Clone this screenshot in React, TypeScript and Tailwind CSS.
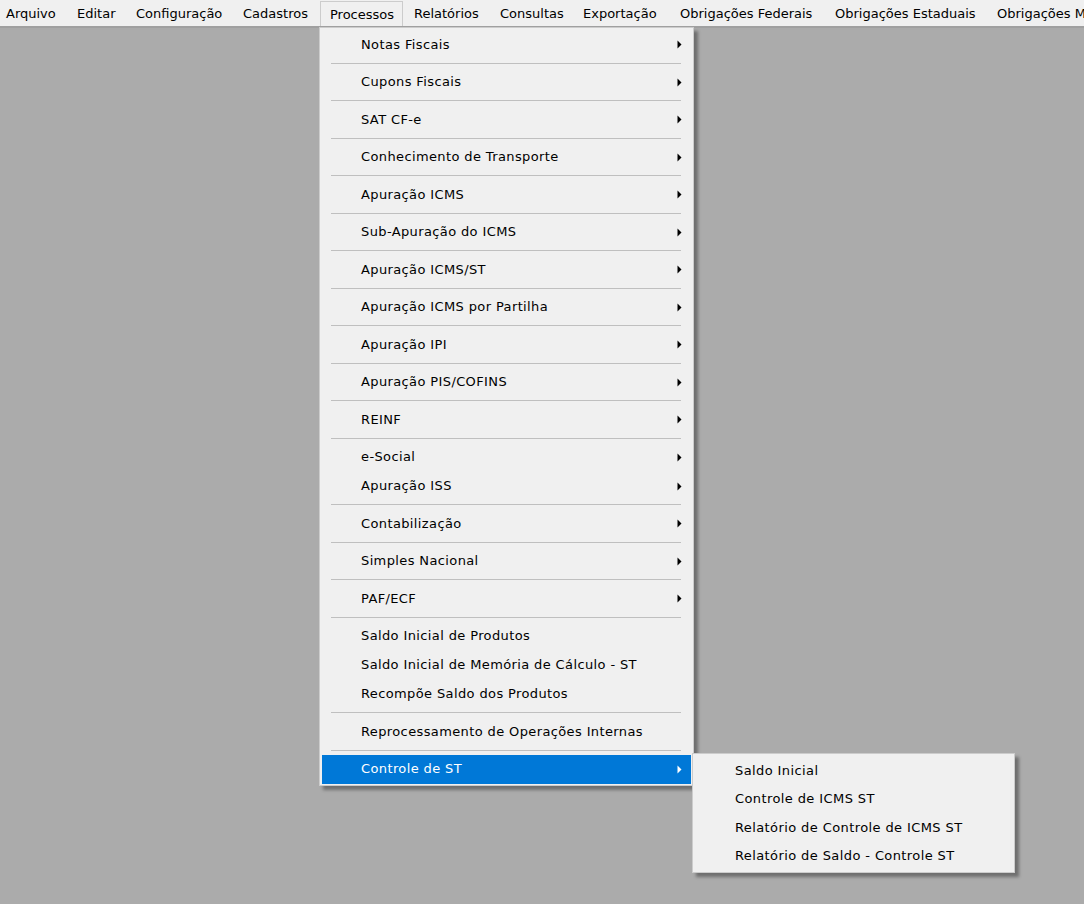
import React from "react";

type Entry = { label?: string; sub?: boolean; sep?: boolean; active?: boolean };

const top: { label: string; w: number }[] = [
  { label: "Arquivo", w: 68 },
  { label: "Editar", w: 59 },
  { label: "Configuração", w: 107 },
  { label: "Cadastros", w: 86 },
  { label: "Processos", w: 85 },
  { label: "Relatórios", w: 86 },
  { label: "Consultas", w: 83 },
  { label: "Exportação", w: 97 },
  { label: "Obrigações Federais", w: 155 },
  { label: "Obrigações Estaduais", w: 162 },
  { label: "Obrigações Municipais", w: 200 },
];

const items: Entry[] = [
  { label: "Notas Fiscais", sub: true },
  { sep: true },
  { label: "Cupons Fiscais", sub: true },
  { sep: true },
  { label: "SAT CF-e", sub: true },
  { sep: true },
  { label: "Conhecimento de Transporte", sub: true },
  { sep: true },
  { label: "Apuração ICMS", sub: true },
  { sep: true },
  { label: "Sub-Apuração do ICMS", sub: true },
  { sep: true },
  { label: "Apuração ICMS/ST", sub: true },
  { sep: true },
  { label: "Apuração ICMS por Partilha", sub: true },
  { sep: true },
  { label: "Apuração IPI", sub: true },
  { sep: true },
  { label: "Apuração PIS/COFINS", sub: true },
  { sep: true },
  { label: "REINF", sub: true },
  { sep: true },
  { label: "e-Social", sub: true },
  { label: "Apuração ISS", sub: true },
  { sep: true },
  { label: "Contabilização", sub: true },
  { sep: true },
  { label: "Simples Nacional", sub: true },
  { sep: true },
  { label: "PAF/ECF", sub: true },
  { sep: true },
  { label: "Saldo Inicial de Produtos" },
  { label: "Saldo Inicial de Memória de Cálculo - ST" },
  { label: "Recompõe Saldo dos Produtos" },
  { sep: true },
  { label: "Reprocessamento de Operações Internas" },
  { sep: true },
  { label: "Controle de ST", sub: true, active: true },
];

const subItems = [
  "Saldo Inicial",
  "Controle de ICMS ST",
  "Relatório de Controle de ICMS ST",
  "Relatório de Saldo - Controle ST",
];

function Arrow({ white }: { white?: boolean }) {
  return (
    <svg width="5" height="9" viewBox="0 0 5 9" className="block">
      <path d="M0.5 0.5 L4.5 4.5 L0.5 8.5 Z" fill={white ? "#ffffff" : "#000000"} />
    </svg>
  );
}

export default function App() {
  return (
    <div
      className="relative w-[1084px] h-[904px] overflow-hidden bg-[#ababab] text-[13px] text-black"
      style={{ fontFamily: '"DejaVu Sans", Verdana, sans-serif' }}
    >
      {/* menu bar */}
      <div className="h-[28px] bg-[#f0f0f0] border-b-2 border-[#a0a0a0] flex whitespace-nowrap overflow-hidden">
        {top.map((t, i) => {
          const active = t.label === "Processos";
          return (
            <div
              key={t.label}
              className={
                "shrink-0 h-[26px] flex items-center pt-[2px] " +
                (i === 0 ? "pl-[6px] " : "pl-[9px] ") +
                (active
                  ? "mt-[1px] h-[25px] border border-b-0 border-[#cccccc] bg-[#f0f0f0] pl-[8px] mr-[2px] "
                  : "")
              }
              style={{ width: active ? t.w - 2 : t.w }}
            >
              <span className={active ? "-mt-[1px]" : ""}>{t.label}</span>
            </div>
          );
        })}
      </div>

      {/* dropdown */}
      <div className="absolute left-[319px] top-[27px] w-[375px] bg-[#f0f0f0] border border-[#cccccc] p-[2px] pb-[1px] shadow-[4px_4px_3px_rgba(0,0,0,0.35)] tracking-[0.38px]">
        {items.map((it, i) =>
          it.sep ? (
            <div key={i} className="h-[8.5px] flex items-center pl-[9px] pr-[10px]">
              <div className="h-px w-full bg-[#bfbfbf]" />
            </div>
          ) : (
            <div
              key={i}
              className={
                "h-[29px] flex items-center justify-between pl-[39px] pr-[9px] " +
                (it.active ? "h-[27px] bg-[#0078d7] text-white" : "")
              }
            >
              <span>{it.label}</span>
              {it.sub && <Arrow white={it.active} />}
            </div>
          )
        )}
      </div>

      {/* submenu */}
      <div className="absolute left-[692px] top-[753px] w-[323px] bg-[#f0f0f0] border border-[#cccccc] py-[2px] shadow-[4px_4px_3px_rgba(0,0,0,0.35)] tracking-[0.4px]">
        {subItems.map((s) => (
          <div key={s} className="h-[28.6px] flex items-center pl-[42px]">
            {s}
          </div>
        ))}
      </div>
    </div>
  );
}
